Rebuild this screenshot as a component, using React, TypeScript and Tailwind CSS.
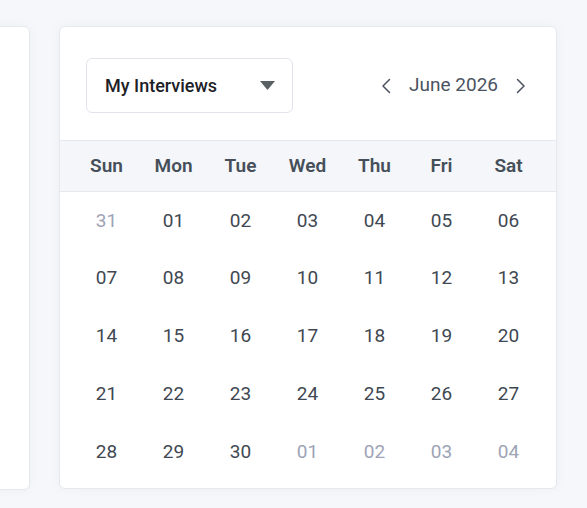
const weekDays = ["Sun", "Mon", "Tue", "Wed", "Thu", "Fri", "Sat"];

type DayCell = { label: string; muted?: boolean };

const weeks: DayCell[][] = [
  [{ label: "31", muted: true }, { label: "01" }, { label: "02" }, { label: "03" }, { label: "04" }, { label: "05" }, { label: "06" }],
  [{ label: "07" }, { label: "08" }, { label: "09" }, { label: "10" }, { label: "11" }, { label: "12" }, { label: "13" }],
  [{ label: "14" }, { label: "15" }, { label: "16" }, { label: "17" }, { label: "18" }, { label: "19" }, { label: "20" }],
  [{ label: "21" }, { label: "22" }, { label: "23" }, { label: "24" }, { label: "25" }, { label: "26" }, { label: "27" }],
  [{ label: "28" }, { label: "29" }, { label: "30" }, { label: "01", muted: true }, { label: "02", muted: true }, { label: "03", muted: true }, { label: "04", muted: true }],
];

const Chevron = ({ dir }: { dir: "left" | "right" }) => (
  <svg width="10" height="16" viewBox="0 0 10 16" fill="none" stroke="currentColor" strokeWidth="1.5" strokeLinecap="round" strokeLinejoin="round">
    {dir === "left" ? <path d="M8.5 1.5 2 8l6.5 6.5" /> : <path d="M1.5 1.5 8 8l-6.5 6.5" />}
  </svg>
);

const App = () => {
  return (
    <div
      className="w-[587px] h-[508px] bg-[#f6f7fa] overflow-hidden flex gap-[29px] pt-[26px]"
      style={{ fontFamily: "Roboto, 'Noto Sans', sans-serif" }}
    >
      {/* sidebar card, mostly off screen */}
      <div className="w-[60px] ml-[-30px] h-[464px] shrink-0 bg-white border border-[#e6e8ef] rounded-md shadow-[0_0_12px_rgba(30,40,80,0.04)]" />

      <div className="w-[498px] h-[463px] shrink-0 bg-white border border-[#e6e8ef] rounded-md shadow-[0_0_12px_rgba(30,40,80,0.04)] flex flex-col">
        <div className="flex items-center justify-between pl-[26px] pr-[30px] pt-[31px] pb-[27px]">
          <button className="w-[207px] h-[55px] border border-[#e1e4ec] rounded-md flex items-center justify-between pl-[18px] pr-[17px] bg-white">
            <span className="text-[18px] font-medium text-[#1d2126]">My Interviews</span>
            <svg width="15" height="9" viewBox="0 0 15 9">
              <path d="M0 0h15L7.5 9z" fill="#5a6163" />
            </svg>
          </button>
          <div className="flex items-center gap-[18px] text-[#4b5360]">
            <Chevron dir="left" />
            <span className="text-[19px]">June 2026</span>
            <Chevron dir="right" />
          </div>
        </div>

        <div className="h-[52px] bg-[#f4f6fa] border-y border-[#e6e8ef] grid grid-cols-7 pl-[13px] pr-[14px]">
          {weekDays.map((d) => (
            <div key={d} className="flex items-center justify-center text-[19px] font-semibold text-[#464f59]">
              {d}
            </div>
          ))}
        </div>

        <div className="flex flex-col pl-[13px] pr-[14px]">
          {weeks.map((week, i) => (
            <div key={i} className="grid grid-cols-7 h-[57.75px]">
              {week.map((day, j) => (
                <div
                  key={j}
                  className={`flex items-center justify-center text-[19px] ${day.muted ? "text-[#9ea3b6]" : "text-[#3f4852]"}`}
                >
                  {day.label}
                </div>
              ))}
            </div>
          ))}
        </div>
      </div>
    </div>
  );
};

export default App;
